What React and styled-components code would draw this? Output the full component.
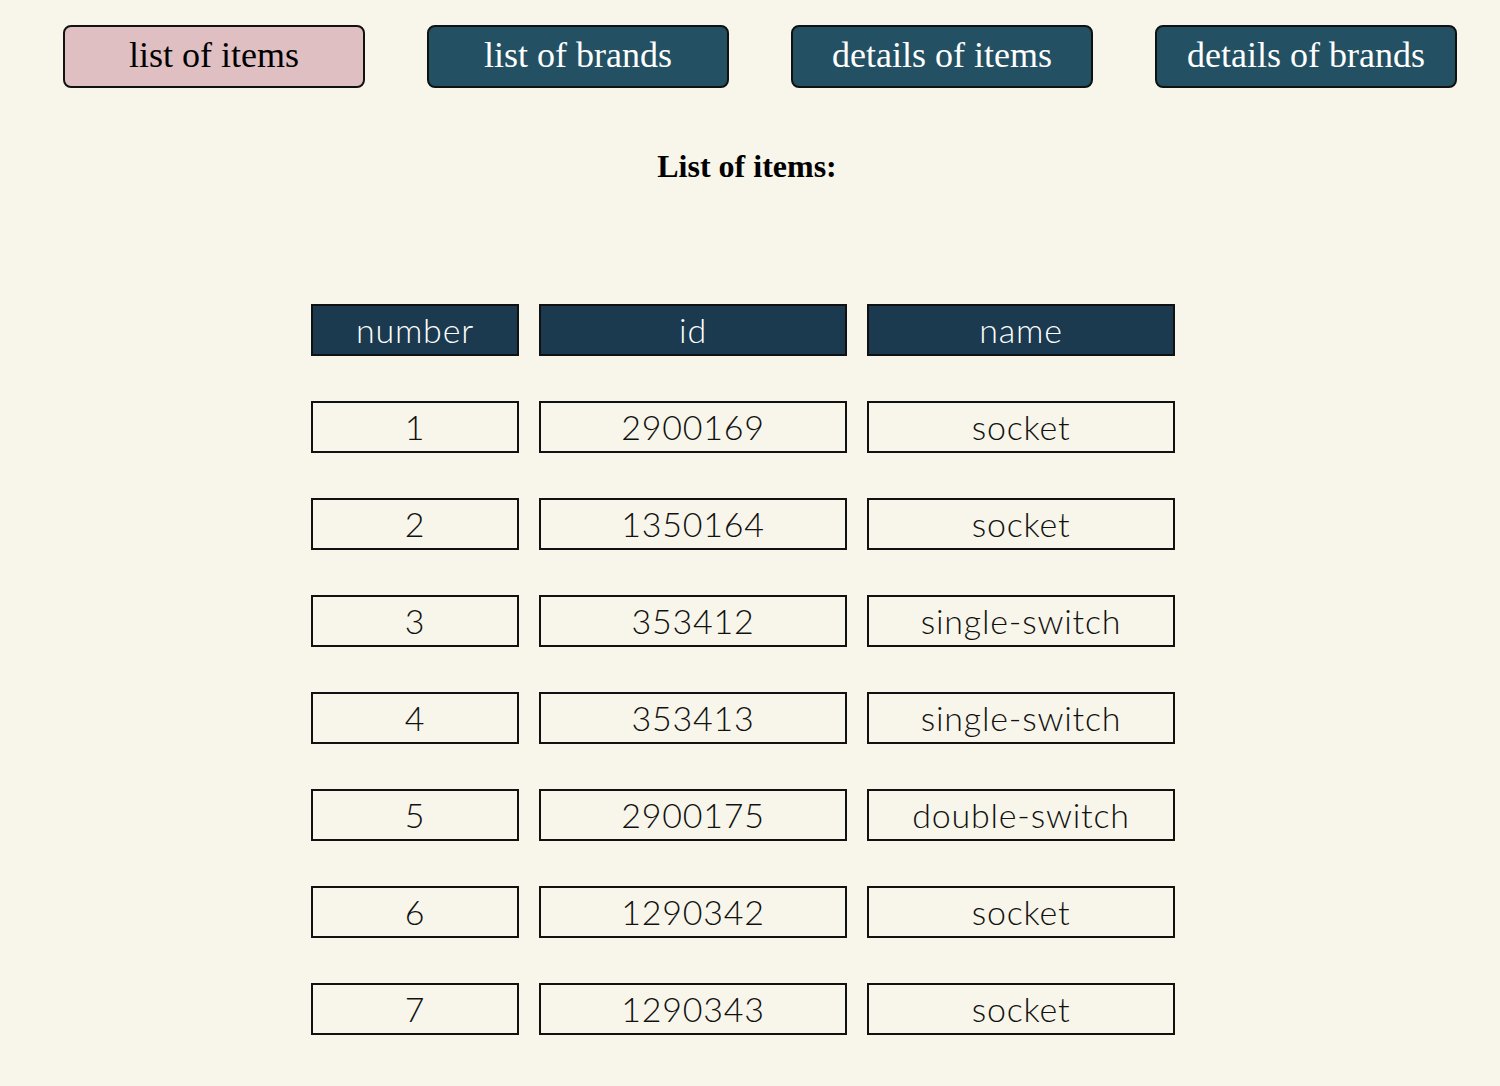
import styled, { createGlobalStyle } from "styled-components";

const GlobalStyle = createGlobalStyle`
  body {
    margin: 8px;
    background-color: #f8f6ea;
    font-family: "Liberation Serif", "Times New Roman", serif;
  }
`;

const tabs = ["list of items", "list of brands", "details of items", "details of brands"];

const items = [
  { id: 2900169, name: "socket" },
  { id: 1350164, name: "socket" },
  { id: 353412, name: "single-switch" },
  { id: 353413, name: "single-switch" },
  { id: 2900175, name: "double-switch" },
  { id: 1290342, name: "socket" },
  { id: 1290343, name: "socket" },
];

const App = () => {
  return (
    <>
      <GlobalStyle />
      <StNav>
        {tabs.map((t, i) => (
          <StTab key={t} active={i === 0}>
            {t}
          </StTab>
        ))}
      </StNav>
      <StTitle>List of items:</StTitle>
      <StTableWrap>
        <StTable>
          <StCell head>number</StCell>
          <StCell head>id</StCell>
          <StCell head>name</StCell>
          {items.map((item, i) => (
            <StRowGroup key={item.id}>
              <StCell>{i + 1}</StCell>
              <StCell>{item.id}</StCell>
              <StCell>{item.name}</StCell>
            </StRowGroup>
          ))}
        </StTable>
      </StTableWrap>
    </>
  );
};

export default App;

const StNav = styled.div`
  display: flex;
  gap: 62px;
  padding: 17px 35px 0 55px;
`;

const StTab = styled.button.attrs({ type: "button" })`
  width: 303px;
  height: 63px;
  box-sizing: border-box;
  border: 2px solid #111;
  border-radius: 8px;
  background-color: ${(p) => (p.active ? "#dfbfc2" : "#235163")};
  color: ${(p) => (p.active ? "#000" : "#fff")};
  font-family: "Liberation Serif", "Times New Roman", serif;
  font-size: 36px;
  line-height: 1;
  padding: 0 0 4px;
  cursor: pointer;
`;

const StTitle = styled.h2`
  margin: 60px 0 0;
  text-align: center;
  font-size: 32px;
  font-weight: 700;
  line-height: 36px;
  padding-right: 6px;
`;

const StTableWrap = styled.div`
  display: flex;
  justify-content: center;
  padding-right: 14px;
  margin-top: 120px;
`;

const StTable = styled.div`
  display: grid;
  grid-template-columns: 208px 308px 308px;
  column-gap: 20px;
  row-gap: 45px;
`;

const StRowGroup = styled.div`
  display: contents;
`;

const StCell = styled.div`
  height: 52px;
  box-sizing: border-box;
  border: 2px solid #111;
  background-color: ${(p) => (p.head ? "#1b3a4f" : "transparent")};
  color: ${(p) => (p.head ? "#fff" : "#111")};
  display: flex;
  align-items: center;
  justify-content: center;
  font-family: Lato, "Open Sans", sans-serif;
  font-weight: 300;
  font-size: 34px;
  letter-spacing: 0.8px;
  line-height: 1;
`;
